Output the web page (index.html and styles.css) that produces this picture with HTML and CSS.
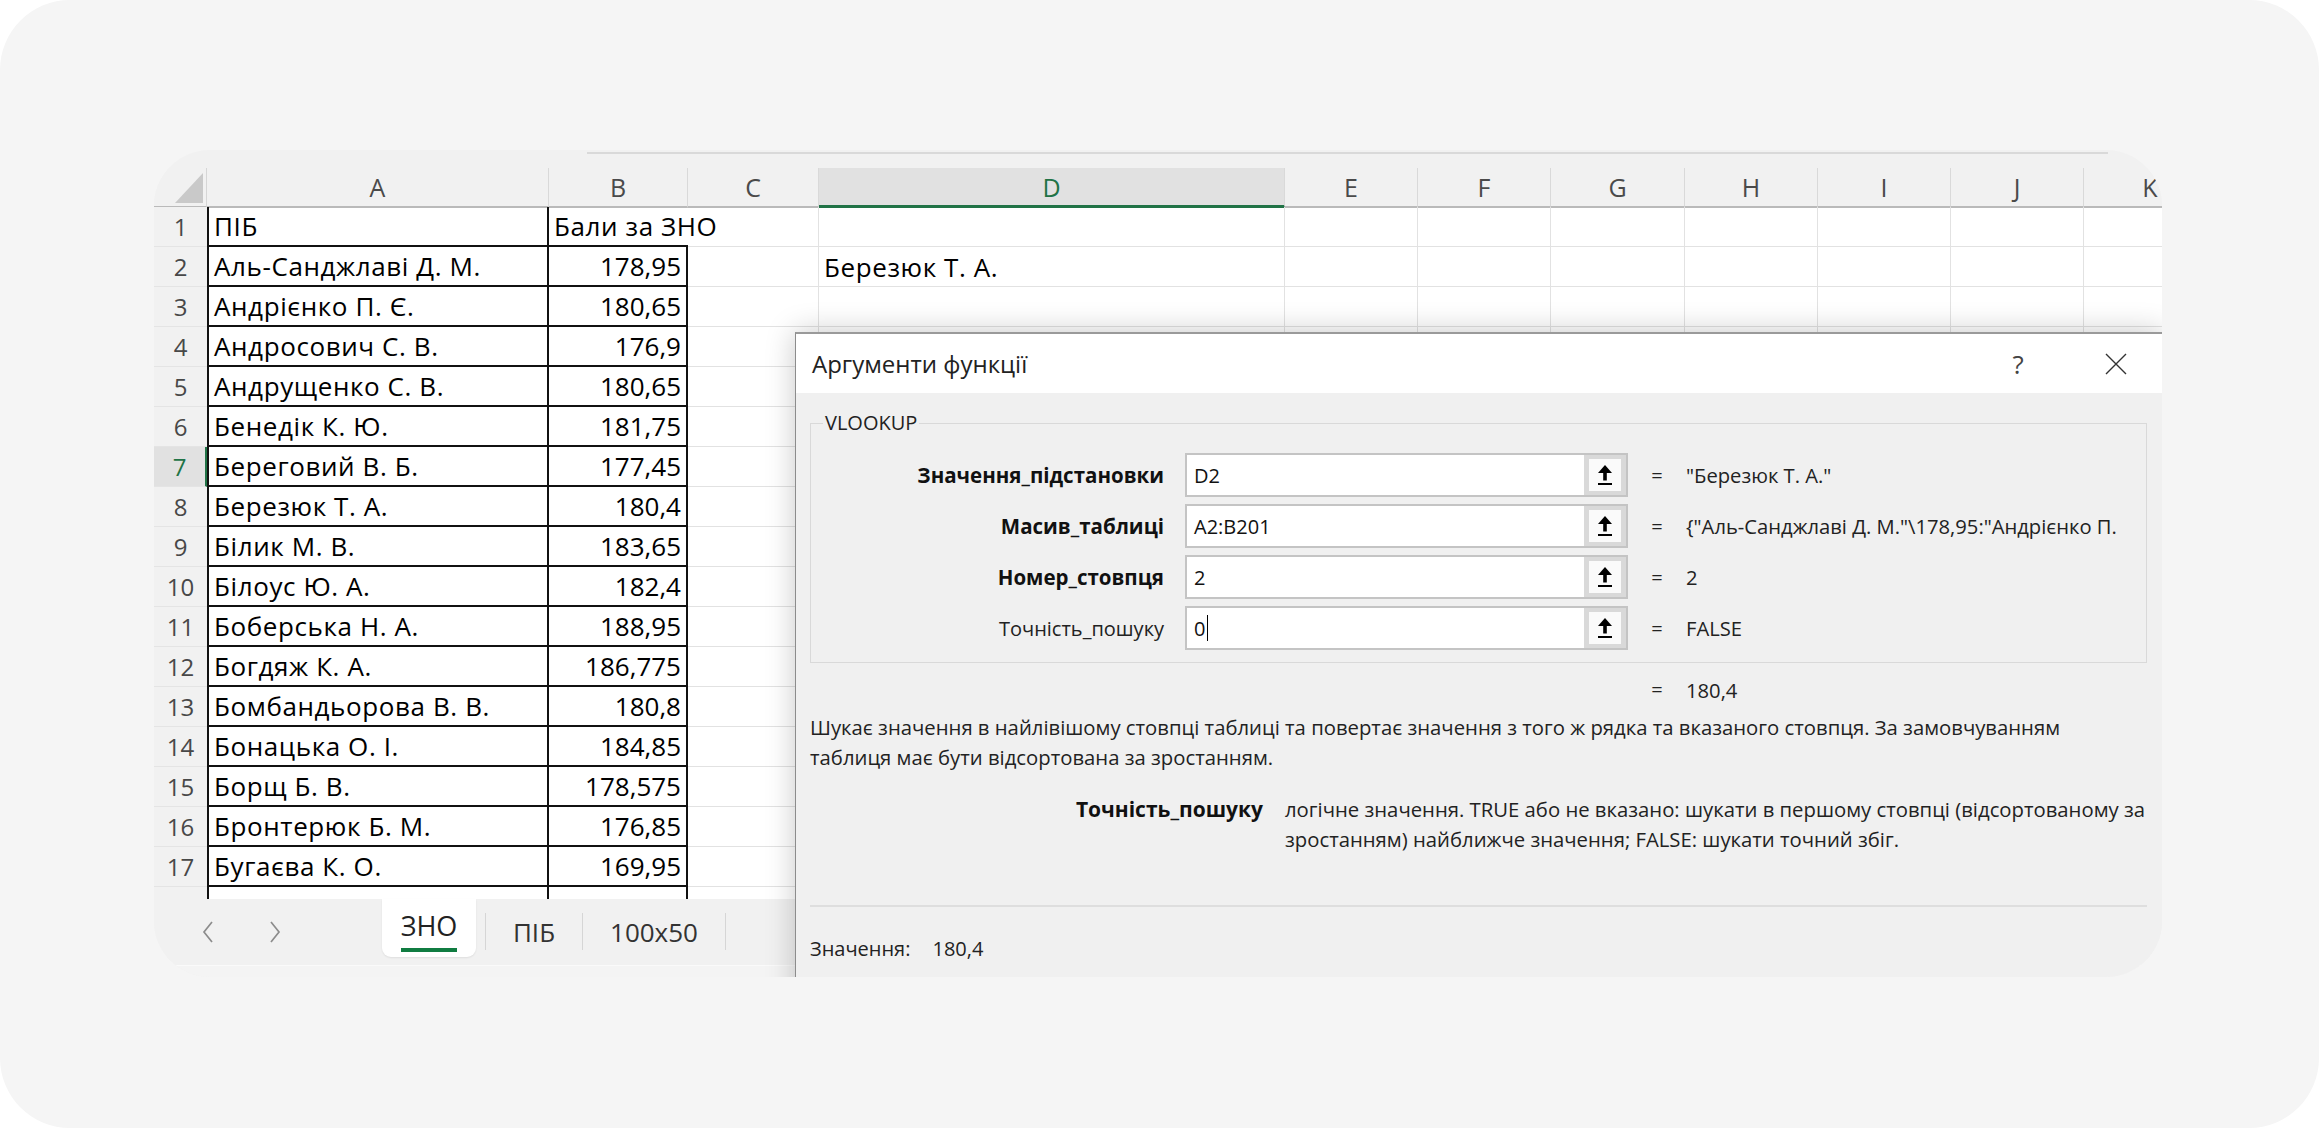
FILE: index.html
```html
<!DOCTYPE html>
<html lang="uk">
<head>
<meta charset="utf-8">
<title>VLOOKUP</title>
<link rel="stylesheet" href="styles.css">
</head>
<body>
<div class="frame">
  <div class="card">
    <div class="topstrip"><div class="topline"></div></div>

    <div class="row colhdr">
      <div class="corner"><svg width="53" height="38" viewBox="0 0 53 38"><polygon points="21,35 49,35 49,5" fill="#c9c9c9"/></svg></div>
      <div class="ch">A</div><div class="ch">B</div><div class="ch">C</div><div class="ch sel">D</div><div class="ch">E</div><div class="ch">F</div><div class="ch">G</div><div class="ch">H</div><div class="ch">I</div><div class="ch">J</div><div class="ch">K</div>
    </div>

    <div class="row"><div class="rh">1</div><div class="c ta">ПІБ</div><div class="c b1">Бали за ЗНО</div><div class="c"></div><div class="c"></div><div class="c"></div><div class="c"></div><div class="c"></div><div class="c"></div><div class="c"></div><div class="c"></div><div class="c"></div></div>
    <div class="row"><div class="rh">2</div><div class="c ta">Аль-Санджлаві Д. М.</div><div class="c tb">178,95</div><div class="c"></div><div class="c name">Березюк Т. А.</div><div class="c"></div><div class="c"></div><div class="c"></div><div class="c"></div><div class="c"></div><div class="c"></div><div class="c"></div></div>
    <div class="row"><div class="rh">3</div><div class="c ta">Андрієнко П. Є.</div><div class="c tb">180,65</div><div class="c"></div><div class="c"></div><div class="c"></div><div class="c"></div><div class="c"></div><div class="c"></div><div class="c"></div><div class="c"></div><div class="c"></div></div>
    <div class="row"><div class="rh">4</div><div class="c ta">Андросович С. В.</div><div class="c tb">176,9</div><div class="c"></div><div class="c"></div><div class="c"></div><div class="c"></div><div class="c"></div><div class="c"></div><div class="c"></div><div class="c"></div><div class="c"></div></div>
    <div class="row"><div class="rh">5</div><div class="c ta">Андрущенко С. В.</div><div class="c tb">180,65</div><div class="c"></div><div class="c"></div><div class="c"></div><div class="c"></div><div class="c"></div><div class="c"></div><div class="c"></div><div class="c"></div><div class="c"></div></div>
    <div class="row"><div class="rh">6</div><div class="c ta">Бенедік К. Ю.</div><div class="c tb">181,75</div><div class="c"></div><div class="c"></div><div class="c"></div><div class="c"></div><div class="c"></div><div class="c"></div><div class="c"></div><div class="c"></div><div class="c"></div></div>
    <div class="row"><div class="rh sel">7</div><div class="c ta">Береговий В. Б.</div><div class="c tb">177,45</div><div class="c"></div><div class="c"></div><div class="c"></div><div class="c"></div><div class="c"></div><div class="c"></div><div class="c"></div><div class="c"></div><div class="c"></div></div>
    <div class="row"><div class="rh">8</div><div class="c ta">Березюк Т. А.</div><div class="c tb">180,4</div><div class="c"></div><div class="c"></div><div class="c"></div><div class="c"></div><div class="c"></div><div class="c"></div><div class="c"></div><div class="c"></div><div class="c"></div></div>
    <div class="row"><div class="rh">9</div><div class="c ta">Білик М. В.</div><div class="c tb">183,65</div><div class="c"></div><div class="c"></div><div class="c"></div><div class="c"></div><div class="c"></div><div class="c"></div><div class="c"></div><div class="c"></div><div class="c"></div></div>
    <div class="row"><div class="rh">10</div><div class="c ta">Білоус Ю. А.</div><div class="c tb">182,4</div><div class="c"></div><div class="c"></div><div class="c"></div><div class="c"></div><div class="c"></div><div class="c"></div><div class="c"></div><div class="c"></div><div class="c"></div></div>
    <div class="row"><div class="rh">11</div><div class="c ta">Боберська Н. А.</div><div class="c tb">188,95</div><div class="c"></div><div class="c"></div><div class="c"></div><div class="c"></div><div class="c"></div><div class="c"></div><div class="c"></div><div class="c"></div><div class="c"></div></div>
    <div class="row"><div class="rh">12</div><div class="c ta">Богдяж К. А.</div><div class="c tb">186,775</div><div class="c"></div><div class="c"></div><div class="c"></div><div class="c"></div><div class="c"></div><div class="c"></div><div class="c"></div><div class="c"></div><div class="c"></div></div>
    <div class="row"><div class="rh">13</div><div class="c ta">Бомбандьорова В. В.</div><div class="c tb">180,8</div><div class="c"></div><div class="c"></div><div class="c"></div><div class="c"></div><div class="c"></div><div class="c"></div><div class="c"></div><div class="c"></div><div class="c"></div></div>
    <div class="row"><div class="rh">14</div><div class="c ta">Бонацька О. І.</div><div class="c tb">184,85</div><div class="c"></div><div class="c"></div><div class="c"></div><div class="c"></div><div class="c"></div><div class="c"></div><div class="c"></div><div class="c"></div><div class="c"></div></div>
    <div class="row"><div class="rh">15</div><div class="c ta">Борщ Б. В.</div><div class="c tb">178,575</div><div class="c"></div><div class="c"></div><div class="c"></div><div class="c"></div><div class="c"></div><div class="c"></div><div class="c"></div><div class="c"></div><div class="c"></div></div>
    <div class="row"><div class="rh">16</div><div class="c ta">Бронтерюк Б. М.</div><div class="c tb">176,85</div><div class="c"></div><div class="c"></div><div class="c"></div><div class="c"></div><div class="c"></div><div class="c"></div><div class="c"></div><div class="c"></div><div class="c"></div></div>
    <div class="row"><div class="rh">17</div><div class="c ta">Бугаєва К. О.</div><div class="c tb">169,95</div><div class="c"></div><div class="c"></div><div class="c"></div><div class="c"></div><div class="c"></div><div class="c"></div><div class="c"></div><div class="c"></div><div class="c"></div></div>
    <div class="row partial"><div class="rh"></div><div class="c ta"></div><div class="c tb"></div><div class="c"></div><div class="c"></div><div class="c"></div><div class="c"></div><div class="c"></div><div class="c"></div><div class="c"></div><div class="c"></div><div class="c"></div></div>

    <div class="tabs">
      <div class="nav">
        <svg class="chev" width="14" height="24" viewBox="0 0 14 24"><polyline points="11,2 3,12 11,22" fill="none" stroke="#8c8c8c" stroke-width="1.7"/></svg>
        <svg class="chev" width="14" height="24" viewBox="0 0 14 24"><polyline points="3,2 11,12 3,22" fill="none" stroke="#8c8c8c" stroke-width="1.7"/></svg>
      </div>
      <div class="tab active"><span class="tab-label">ЗНО</span></div>
      <div class="tab t-pib">ПІБ</div>
      <div class="tab t-100">100x50</div>
    </div>
    <div class="bottomstrip"></div>

    <div class="dialog">
      <div class="dlg-title">
        <span class="caption">Аргументи функції</span>
        <span class="help">?</span>
        <span class="close"><svg width="22" height="22" viewBox="0 0 22 22"><path d="M1 1 L21 21 M21 1 L1 21" stroke="#333" stroke-width="1.4" fill="none"/></svg></span>
      </div>
      <div class="dlg-body">
        <fieldset class="group">
          <legend>VLOOKUP</legend>
          <div class="args">
            <div class="lbl strong">Значення_підстановки</div>
            <div class="field"><div class="inp">D2</div><div class="ref"><span class="refbtn"><svg width="18" height="22" viewBox="0 0 18 22"><polygon points="9,1 16,9 2,9" fill="#000"/><rect x="7.2" y="8.5" width="3.6" height="8" fill="#000"/><rect x="2" y="19" width="14" height="2" fill="#000"/></svg></span></div></div>
            <div class="eq">=</div>
            <div class="val">"Березюк Т. А."</div>

            <div class="lbl strong">Масив_таблиці</div>
            <div class="field"><div class="inp">A2:B201</div><div class="ref"><span class="refbtn"><svg width="18" height="22" viewBox="0 0 18 22"><polygon points="9,1 16,9 2,9" fill="#000"/><rect x="7.2" y="8.5" width="3.6" height="8" fill="#000"/><rect x="2" y="19" width="14" height="2" fill="#000"/></svg></span></div></div>
            <div class="eq">=</div>
            <div class="val">{"Аль-Санджлаві Д. М."\178,95:"Андрієнко П.</div>

            <div class="lbl strong">Номер_стовпця</div>
            <div class="field"><div class="inp">2</div><div class="ref"><span class="refbtn"><svg width="18" height="22" viewBox="0 0 18 22"><polygon points="9,1 16,9 2,9" fill="#000"/><rect x="7.2" y="8.5" width="3.6" height="8" fill="#000"/><rect x="2" y="19" width="14" height="2" fill="#000"/></svg></span></div></div>
            <div class="eq">=</div>
            <div class="val">2</div>

            <div class="lbl">Точність_пошуку</div>
            <div class="field"><div class="inp">0<span class="caret"></span></div><div class="ref"><span class="refbtn"><svg width="18" height="22" viewBox="0 0 18 22"><polygon points="9,1 16,9 2,9" fill="#000"/><rect x="7.2" y="8.5" width="3.6" height="8" fill="#000"/><rect x="2" y="19" width="14" height="2" fill="#000"/></svg></span></div></div>
            <div class="eq">=</div>
            <div class="val">FALSE</div>
          </div>
        </fieldset>

        <div class="result"><span class="eq">=</span><span class="val">180,4</span></div>

        <p class="desc">Шукає значення в найлівішому стовпці таблиці та повертає значення з того ж рядка та вказаного стовпця. За замовчуванням<br>таблиця має бути відсортована за зростанням.</p>

        <div class="param">
          <div class="pname">Точність_пошуку</div>
          <div class="ptext">логічне значення. TRUE або не вказано: шукати в першому стовпці (відсортованому за<br>зростанням) найближче значення; FALSE: шукати точний збіг.</div>
        </div>

        <div class="sep"></div>

        <div class="footer"><span>Значення:</span><span class="fval">180,4</span></div>
      </div>
    </div>
  </div>
</div>
</body>
</html>
```

FILE: styles.css
```css
* { box-sizing: border-box; }
html, body { margin: 0; padding: 0; }
body {
  background: #ffffff;
  font-family: "Open Sans", "Noto Sans", "Liberation Sans", sans-serif;
  color: #000;
}

.frame {
  width: 2319px;
  height: 1128px;
  background: #f5f5f5;
  border-radius: 70px;
  padding: 150px 0 0 154px;
  overflow: hidden;
}

.card {
  position: relative;
  width: 2008px;
  height: 827px;
  background: #f1f1f1;
  border-radius: 56px;
  overflow: hidden;
}

.topstrip { height: 18px; padding: 2px 0 0 433px; }
.topline { width: 1521px; height: 2px; background: #d9d9d9; }

/* grid rows */
.row {
  display: grid;
  grid-template-columns: 53px 342px 139px 131px 466px 133px 133px 134px 133px 133px 133px 133px;
  height: 40px;
  background: #ffffff;
}
.row.partial { height: 12px; overflow: hidden; }

.colhdr { height: 39px; background: #f1f1f1; }
.corner {
  border-bottom: 2px solid #bababa;
  border-right: 1px solid #d6d6d6;
}
.corner svg { display: block; }
.ch {
  display: flex;
  align-items: center;
  justify-content: center;
  font-size: 25px;
  color: #4a4a4a;
  border-right: 1px solid #d9d9d9;
  border-bottom: 2px solid #bababa;
}
.ch.sel {
  background: #e1e1e1;
  color: #217346;
  border-bottom: 3px solid #217346;
}

.rh {
  display: flex;
  align-items: center;
  justify-content: center;
  background: #f1f1f1;
  color: #484848;
  font-size: 24px;
  border-bottom: 1px solid #e4e4e4;
}
.rh.sel {
  background: #e1e1e1;
  color: #217346;
  border-right: 2px solid #217346;
}

.c {
  display: flex;
  align-items: center;
  padding: 0 5px;
  font-size: 26px;
  white-space: nowrap;
  border-right: 1px solid #e2e2e2;
  border-bottom: 1px solid #e2e2e2;
  color: #000;
}
.c.ta {
  letter-spacing: 0.6px;
  border-left: 2px solid #111;
  border-right: 2px solid #111;
  border-bottom: 2px solid #111;
}
.c.name { letter-spacing: 0.6px; }
.c.tb {
  justify-content: flex-end;
  border-right: 2px solid #111;
  border-bottom: 2px solid #111;
}
.c.b1 {
  letter-spacing: 0.6px;
  border-right: none;
  border-bottom: 2px solid #111;
}
.partial .c { border-bottom: none; }
.partial .rh { border-bottom: none; }

/* sheet tabs */
.tabs {
  display: flex;
  align-items: stretch;
  height: 66px;
  background: #f1f1f1;
}
.nav {
  width: 228px;
  display: flex;
  align-items: center;
  padding-left: 47px;
  gap: 53px;
}
.chev { display: block; }
.tab {
  display: flex;
  align-items: center;
  justify-content: center;
  font-size: 26px;
  color: #333;
}
.tab.active {
  width: 94px;
  height: 58px;
  align-items: flex-start;
  padding-top: 9px;
  background: #ffffff;
  border-radius: 0 0 9px 9px;
  box-shadow: 0 1px 2px rgba(0,0,0,0.08);
  color: #222;
  font-size: 27px;
}
.tab-label {
  display: block;
  line-height: 36px;
  border-bottom: 4px solid #107c41;
  padding-bottom: 4px;
}
.t-pib {
  width: 98px;
  margin-left: 9px;
  border-left: 1px solid #d6d6d6;
  border-right: 1px solid #d6d6d6;
  margin-top: 14px;
  height: 37px;
}
.t-100 {
  width: 143px;
  border-right: 1px solid #d6d6d6;
  margin-top: 14px;
  height: 37px;
}
.bottomstrip {
  height: 12px;
  border-top: 1px solid #fafafa;
  background: #f4f4f4;
}

/* dialog */
.dialog {
  position: absolute;
  left: 641px;
  top: 182px;
  width: 1368px;
  height: 720px;
  background: #f0f0f0;
  border: 1px solid #8c8c8c;
  border-top: 2px solid #9a9a9a;
  box-shadow: 0 0 28px rgba(0,0,0,0.22);
  color: #1a1a1a;
  font-size: 20px;
}
.dlg-title {
  height: 59px;
  background: #ffffff;
  display: flex;
  align-items: center;
  padding: 0 26px 0 16px;
}
.caption { font-size: 24px; color: #222; }
.help {
  margin-left: auto;
  width: 40px;
  text-align: center;
  font-size: 26px;
  color: #444;
}
.close {
  width: 40px;
  margin-left: 58px;
  display: flex;
  justify-content: center;
}
.close svg { display: block; }

.dlg-body { padding: 0 15px 0 14px; }

.group {
  margin: 18px 0 0 0;
  padding: 18px 12px 12px 12px;
  border: 1px solid #d9d9d9;
  min-width: 0;
}
.group legend {
  padding: 0 2px;
  font-size: 20px;
  line-height: 24px;
  color: #222;
}
.args {
  display: grid;
  grid-template-columns: 362px 443px 58px 1fr;
  grid-auto-rows: 44px;
  row-gap: 7px;
  align-items: center;
}
.lbl {
  text-align: right;
  padding-right: 21px;
  white-space: nowrap;
  color: #222;
}
.lbl.strong { font-weight: 700; color: #111; font-size: 20.5px; }
.field {
  height: 44px;
  display: flex;
  border: 2px solid #c4c4c4;
  background: #fff;
}
.inp {
  flex: 1;
  display: flex;
  align-items: center;
  padding-left: 7px;
  color: #111;
}
.caret {
  display: inline-block;
  width: 1px;
  height: 26px;
  background: #000;
  margin-left: 2px;
}
.ref {
  width: 42px;
  background: #d9d9d9;
  display: flex;
  align-items: center;
  justify-content: center;
}
.refbtn {
  width: 32px;
  height: 32px;
  background: #fafafa;
  display: flex;
  align-items: center;
  justify-content: center;
}
.refbtn svg { display: block; }
.eq { text-align: center; color: #222; }
.val { white-space: nowrap; color: #222; font-size: 20.2px; }

.result {
  display: flex;
  margin-top: 15px;
  padding-left: 818px;
  line-height: 24px;
}
.result .eq { width: 58px; }

.desc {
  margin: 10px 0 0 0;
  line-height: 30px;
  font-size: 20.3px;
  white-space: nowrap;
  color: #222;
}

.param {
  display: grid;
  grid-template-columns: 453px 1fr;
  column-gap: 22px;
  margin-top: 22px;
  line-height: 30px;
  font-size: 20.3px;
}
.pname { text-align: right; font-weight: 700; color: #111; font-size: 21px; }
.ptext { white-space: nowrap; color: #222; }

.sep {
  margin-top: 51px;
  height: 2px;
  background: #dedede;
}

.footer {
  margin-top: 30px;
  line-height: 24px;
  display: flex;
  color: #222;
}
.fval { margin-left: 22px; }
```
